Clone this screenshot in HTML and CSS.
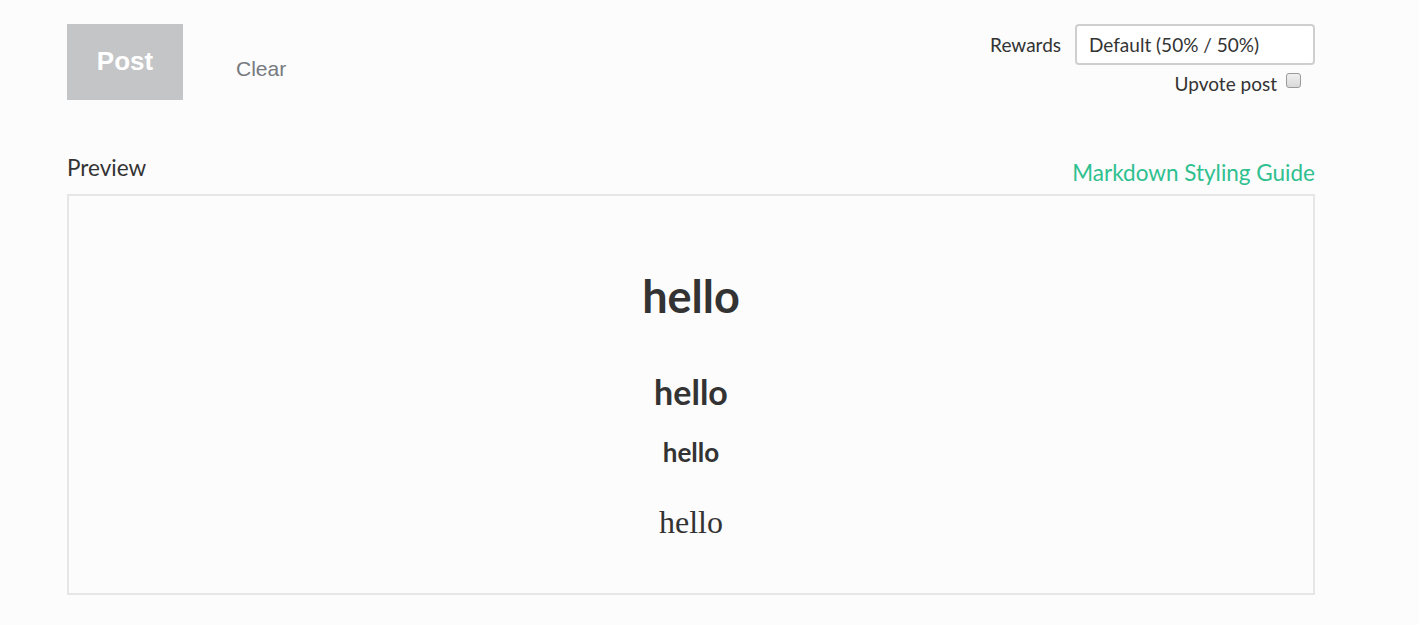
FILE: index.html
```html
<!DOCTYPE html>
<html>
<head>
<meta charset="utf-8">
<link rel="stylesheet" href="styles.css">
</head>
<body>
<div class="page">
  <div class="toolbar">
    <div class="actions">
      <button class="btn-post">Post</button>
      <button class="btn-clear">Clear</button>
    </div>
    <div class="options">
      <div class="rewards">
        <span class="rewards-label">Rewards</span>
        <div class="select">Default (50% / 50%)</div>
      </div>
      <label class="upvote">Upvote post <span class="checkbox"></span></label>
    </div>
  </div>
  <div class="preview-head">
    <span class="preview-title">Preview</span>
    <a class="guide-link">Markdown Styling Guide</a>
  </div>
  <div class="preview-box">
    <h1 class="h1">hello</h1>
    <h2 class="h2">hello</h2>
    <h3 class="h3">hello</h3>
    <p class="para">hello</p>
  </div>
</div>
</body>
</html>
```
FILE: styles.css
```css
html, body {
  margin: 0;
  padding: 0;
  background: #fcfcfc;
}
.page {
  width: 1248px;
  margin-left: 67px;
  padding-top: 24px;
  font-family: Lato, "Noto Sans", sans-serif;
  color: #333;
}
.toolbar {
  display: flex;
  justify-content: space-between;
  align-items: flex-start;
  height: 76px;
}
.actions {
  display: flex;
  align-items: center;
}
.btn-post {
  width: 116px;
  height: 76px;
  border: 0;
  background: #c4c5c7;
  color: #fff;
  font-family: "Liberation Sans", Arial, sans-serif;
  font-weight: bold;
  font-size: 26px;
  padding: 0 0 2px 0;
  border-radius: 0;
}
.btn-clear {
  border: 0;
  background: none;
  font-family: "Liberation Sans", Arial, sans-serif;
  font-size: 21px;
  color: #767a7f;
  margin-left: 47px;
  padding: 14px 6px 0;
}
.options {
  display: flex;
  flex-direction: column;
  align-items: flex-end;
}
.rewards {
  display: flex;
  align-items: center;
}
.rewards-label {
  font-size: 19px;
  margin-right: 14px;
}
.select {
  box-sizing: border-box;
  width: 240px;
  height: 41px;
  border: 2px solid #cfcfcf;
  border-radius: 4px;
  background: #fff;
  font-size: 19px;
  padding: 0 12px;
  display: flex;
  align-items: center;
}
.upvote {
  display: flex;
  align-items: center;
  font-size: 19px;
  margin-top: 7px;
  margin-right: 14px;
}
.checkbox {
  display: inline-block;
  box-sizing: border-box;
  width: 15px;
  height: 15px;
  border: 1px solid #9a9a9a;
  border-radius: 3px;
  background: linear-gradient(#f0f0f0, #d8d8d8);
  margin-left: 9px;
  margin-top: -6px;
}
.preview-head {
  display: flex;
  justify-content: space-between;
  align-items: flex-end;
  margin-top: 56px;
  height: 38px;
}
.preview-title {
  font-size: 22.5px;
  color: #333;
  align-self: flex-start;
  margin-top: -2px;
}
.guide-link {
  font-size: 22.5px;
  color: #2fc08f;
  margin-bottom: 8px;
}
.preview-box {
  box-sizing: border-box;
  height: 401px;
  border: 2px solid #e6e6e6;
  text-align: center;
  padding-top: 70px;
}
.h1 {
  margin: 0;
  font-size: 45px;
  font-weight: bold;
  line-height: 60px;
  color: #333;
}
.h2 {
  margin: 46px 0 0;
  font-size: 34px;
  font-weight: bold;
  line-height: 40px;
  color: #333;
}
.h3 {
  margin: 25px 0 0;
  font-size: 26px;
  font-weight: bold;
  line-height: 30px;
  color: #333;
}
.para {
  margin: 35px 0 0;
  font-family: "Liberation Serif", "Times New Roman", serif;
  font-size: 32px;
  line-height: 40px;
  color: #333;
}
```
